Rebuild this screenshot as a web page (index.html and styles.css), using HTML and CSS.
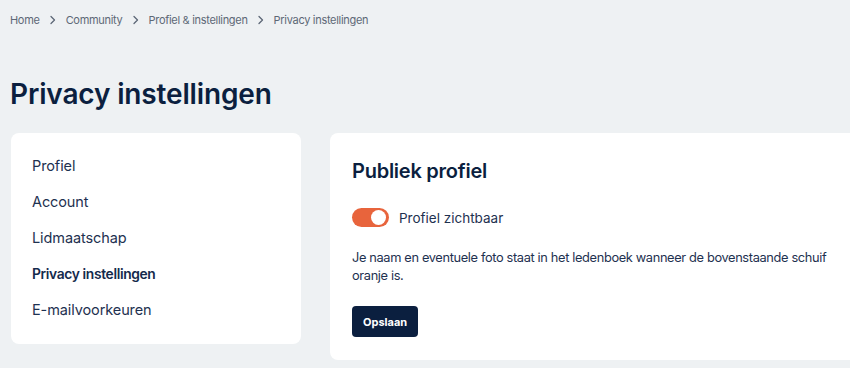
FILE: index.html
```html
<!DOCTYPE html>
<html lang="nl">
<head>
<meta charset="utf-8">
<title>Privacy instellingen</title>
<link rel="stylesheet" href="styles.css">
</head>
<body>
<div class="page">
  <nav class="crumbs">
    <a href="#">Home</a>
    <svg class="chev" viewBox="0 0 8 10" width="8" height="10"><path d="M2 1.5 L5.5 5 L2 8.5" fill="none" stroke="currentColor" stroke-width="1.3" stroke-linecap="round" stroke-linejoin="round"/></svg>
    <a href="#">Community</a>
    <svg class="chev" viewBox="0 0 8 10" width="8" height="10"><path d="M2 1.5 L5.5 5 L2 8.5" fill="none" stroke="currentColor" stroke-width="1.3" stroke-linecap="round" stroke-linejoin="round"/></svg>
    <a href="#">Profiel &amp; instellingen</a>
    <svg class="chev" viewBox="0 0 8 10" width="8" height="10"><path d="M2 1.5 L5.5 5 L2 8.5" fill="none" stroke="currentColor" stroke-width="1.3" stroke-linecap="round" stroke-linejoin="round"/></svg>
    <span>Privacy instellingen</span>
  </nav>
  <h1 class="title">Privacy instellingen</h1>
  <div class="layout">
    <aside class="card side">
      <a href="#" class="item">Profiel</a>
      <a href="#" class="item">Account</a>
      <a href="#" class="item">Lidmaatschap</a>
      <a href="#" class="item active">Privacy instellingen</a>
      <a href="#" class="item">E-mailvoorkeuren</a>
    </aside>
    <section class="card main">
      <h2 class="heading">Publiek profiel</h2>
      <label class="toggle-row">
        <span class="toggle"><span class="knob"></span></span>
        <span>Profiel zichtbaar</span>
      </label>
      <p class="desc">Je naam en eventuele foto staat in het ledenboek wanneer de bovenstaande schuif oranje is.</p>
      <button class="btn">Opslaan</button>
    </section>
  </div>
</div>
</body>
</html>
```

FILE: styles.css
```css
* { box-sizing: border-box; }
html, body { margin: 0; padding: 0; }
body {
  background: #eef1f3;
  font-family: Inter, "Noto Sans", sans-serif;
  color: #142a4c;
  overflow: hidden;
}
.page {
  width: 900px;
  padding: 0 0 0 10px;
}
.crumbs {
  display: flex;
  align-items: center;
  gap: 8px;
  height: 39px;
  font-size: 11px;
  color: #5d6876;
  letter-spacing: -0.3px;
}
.crumbs a { color: inherit; text-decoration: none; }
.chev { color: #5d6876; margin: 0 1px; }
.title {
  margin: 38px 0 0 0;
  font-size: 28px;
  font-weight: 600;
  letter-spacing: -0.15px;
  line-height: 34px;
  color: #0b1f3f;
}
.layout {
  display: grid;
  grid-template-columns: 290px 1fr;
  gap: 29px;
  margin-top: 22px;
  padding-left: 1px;
  align-items: start;
}
.card {
  background: #fff;
  border-radius: 8px;
}
.side {
  display: flex;
  flex-direction: column;
  padding: 23px 21px 24px;
  gap: 16px;
  height: 211px;
}
.item {
  font-size: 14.5px;
  line-height: 20px;
  color: #1e3150;
  text-decoration: none;
  letter-spacing: -0.1px;
}
.item.active {
  font-weight: 600;
  font-size: 13.8px;
  letter-spacing: -0.35px;
  color: #142a4c;
}
.main {
  padding: 24px 22px 22px;
  height: 227px;
}
.heading {
  margin: 0;
  font-size: 20px;
  font-weight: 600;
  letter-spacing: -0.25px;
  line-height: 28px;
  color: #0b1f3f;
}
.toggle-row {
  display: flex;
  align-items: center;
  gap: 10px;
  margin-top: 23px;
  font-size: 13.5px;
  color: #1e3150;
}
.toggle {
  position: relative;
  width: 37px;
  height: 19px;
  border-radius: 10px;
  background: #e8643c;
  display: inline-block;
}
.knob {
  position: absolute;
  top: 2px;
  right: 3px;
  width: 15px;
  height: 15px;
  border-radius: 50%;
  background: #fff;
}
.desc {
  margin: 22px 0 0;
  font-size: 12.8px;
  line-height: 18px;
  color: #1e3150;
  letter-spacing: -0.35px;
  max-width: 480px;
}
.btn {
  display: block;
  margin-top: 21px;
  background: #0b1f3f;
  color: #fff;
  border: 0;
  border-radius: 4px;
  height: 31px;
  padding: 0 11px;
  font-family: inherit;
  font-size: 11px;
  font-weight: 700;
}
```
